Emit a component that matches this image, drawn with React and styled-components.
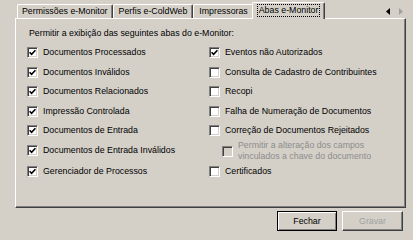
import React from 'react';
import styled, { createGlobalStyle } from 'styled-components';

const GlobalStyle = createGlobalStyle`
  html, body {
    margin: 0;
    padding: 0;
    background: #d4d0c8;
  }
  body {
    font-family: "Liberation Sans", Arial, sans-serif;
    font-size: 8.8px;
    color: #000;
  }
`;

const leftItems = [
  { label: 'Documentos Processados', checked: true },
  { label: 'Documentos Inválidos', checked: true },
  { label: 'Documentos Relacionados', checked: true },
  { label: 'Impressão Controlada', checked: true },
  { label: 'Documentos de Entrada', checked: true },
  { label: 'Documentos de Entrada Inválidos', checked: true, top: true },
  { label: 'Gerenciador de Processos', checked: true },
];

const rightItems = [
  { label: 'Eventos não Autorizados', checked: true },
  { label: 'Consulta de Cadastro de Contribuintes' },
  { label: 'Recopi' },
  { label: 'Falha de Numeração de Documentos' },
  { label: 'Correção de Documentos Rejeitados' },
  { label: ['Permitir a alteração dos campos', 'vinculados a chave do documento'], disabled: true, sub: true },
  { label: 'Certificados' },
];

// tab label + horizontal padding
const tabs = [
  ['Permissões e-Monitor', 4],
  ['Perfis e-ColdWeb', 5],
  ['Impressoras', 5],
  ['Abas e-Monitor', 4],
];

function Check({ item }) {
  return (
    <CheckItem $top={item.top} $sub={item.sub} $disabled={item.disabled}>
      <Box $disabled={item.disabled}>
        {item.checked && (
          <svg width="7" height="7" viewBox="0 0 7 7">
            <path d="M0.6 3.2 L2.6 5.3 L6.4 1.2" fill="none" stroke="#000" strokeWidth="1.6" />
          </svg>
        )}
      </Box>
      <ItemText>
        {Array.isArray(item.label)
          ? item.label.map(l => <Line key={l}>{l}</Line>)
          : item.label}
      </ItemText>
    </CheckItem>
  );
}

export default function App() {
  const rows = leftItems.map((l, i) => [l, rightItems[i]]);
  return (
    <>
      <GlobalStyle />
      <Window>
        <TabStrip>
          {tabs.map(([t, pad], i) => {
            const active = i === tabs.length - 1;
            return (
              <Tab key={t} $active={active} $pad={pad}>
                {active ? <FocusLabel>{t}</FocusLabel> : t}
              </Tab>
            );
          })}
          <Scroller>
            <svg width="4" height="7" viewBox="0 0 4 7">
              <path d="M4 0 L0 3.5 L4 7 Z" fill="#000" />
            </svg>
            <svg width="4" height="7" viewBox="0 0 4 7">
              <path d="M0 0 L4 3.5 L0 7 Z" fill="#a0a0a0" />
            </svg>
          </Scroller>
        </TabStrip>

        <Panel>
          <Caption>Permitir a exibição das seguintes abas do e-Monitor:</Caption>
          <Grid>
            {rows.map(([l, r]) => (
              <React.Fragment key={l.label}>
                <Check item={l} />
                <Check item={r} />
              </React.Fragment>
            ))}
          </Grid>
        </Panel>

        <Buttons>
          <Button $default>Fechar</Button>
          <Button disabled $w={61}>Gravar</Button>
        </Buttons>
      </Window>
    </>
  );
}

const Window = styled.div`
  width: 413px;
  height: 240px;
  box-sizing: border-box;
  padding: 0 7px 0 15px;
  display: flex;
  flex-direction: column;
  background: #d4d0c8;
`;

const TabStrip = styled.div`
  height: 18px;
  display: flex;
  align-items: flex-end;
  padding-left: 2px;
`;

const Tab = styled.div`
  position: relative;
  z-index: ${p => (p.$active ? 2 : 1)};
  box-sizing: border-box;
  height: ${p => (p.$active ? 17 : 14)}px;
  margin: ${p => (p.$active ? '0 -2px -1px -2px' : '0')};
  padding: 0 ${p => p.$pad}px ${p => (p.$active ? 2 : 0)}px;
  display: flex;
  align-items: center;
  border-top: 1px solid #fff;
  border-left: 1px solid #fff;
  border-right: 1px solid #404040;
  box-shadow: inset -1px 0 0 #808080;
  border-radius: 2px 2px 0 0;
  background: #d4d0c8;
  white-space: nowrap;
  line-height: 11px;
`;

const FocusLabel = styled.span`
  padding: 0 1px;
  border: 1px dotted #000;
`;

const Scroller = styled.div`
  margin: 0 3px 3px auto;
  display: flex;
  gap: 9px;
`;

const Panel = styled.div`
  height: 190px;
  box-sizing: border-box;
  border-top: 1px solid #fff;
  border-left: 1px solid #fff;
  border-right: 1px solid #404040;
  border-bottom: 1px solid #404040;
  box-shadow: inset -1px -1px 0 #808080;
  padding: 8px 0 0 11px;
`;

const Caption = styled.div`
  padding-left: 2px;
  line-height: 12px;
  margin-bottom: 4px;
`;

const Grid = styled.div`
  display: grid;
  grid-template-columns: 182px 1fr;
  grid-template-rows: repeat(5, 19.5px) 21px 19.5px;
`;

const CheckItem = styled.div`
  display: flex;
  align-items: center;
  gap: 5px;
  height: ${p => (p.$top ? '19.5px' : 'auto')};
  align-self: ${p => (p.$top ? 'start' : 'stretch')};
  margin-left: ${p => (p.$sub ? 13 : 0)}px;
  color: ${p => (p.$disabled ? '#8c8c8c' : '#000')};
  white-space: nowrap;
`;

const Box = styled.span`
  flex: none;
  width: 11px;
  height: 11px;
  box-sizing: border-box;
  border-top: 1px solid #808080;
  border-left: 1px solid #808080;
  border-right: 1px solid #fff;
  border-bottom: 1px solid #fff;
  box-shadow: inset 1px 1px 0 #404040, inset -1px -1px 0 #d4d0c8;
  background: ${p => (p.$disabled ? '#d4d0c8' : '#fff')};
  display: flex;
  align-items: center;
  justify-content: center;
`;

const ItemText = styled.span`
  line-height: 11px;
`;

const Line = styled.div``;

const Buttons = styled.div`
  display: flex;
  justify-content: flex-end;
  gap: 5px;
  padding: 3px 3px 0 0;
`;

const Button = styled.button`
  width: ${p => p.$w || 60}px;
  height: 20px;
  box-sizing: border-box;
  padding: 0;
  font-family: inherit;
  font-size: 8.8px;
  background: #d4d0c8;
  color: ${p => (p.disabled ? '#a0a0a0' : '#000')};
  border: 1px solid;
  border-color: ${p => (p.$default ? '#000' : '#fff #404040 #404040 #fff')};
  box-shadow: ${p =>
    p.$default
      ? 'inset 1px 1px 0 #fff, inset -1px -1px 0 #808080'
      : 'inset -1px -1px 0 #808080'};
  border-radius: 0;
`;
